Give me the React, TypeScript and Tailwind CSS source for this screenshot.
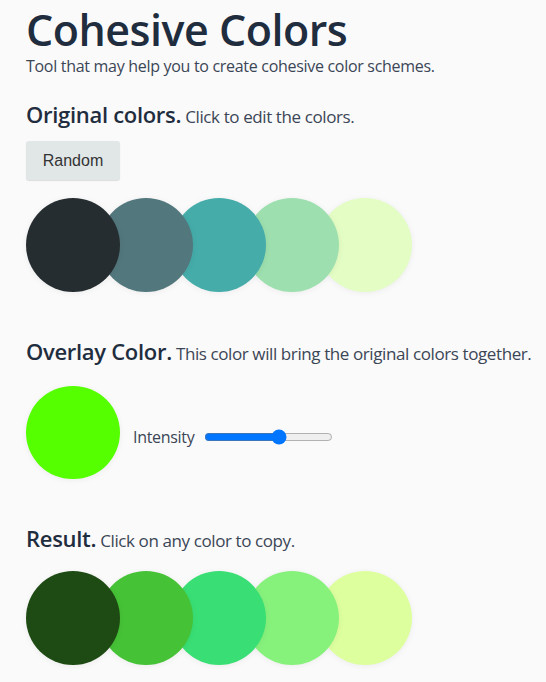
import React from 'react';

const original = ['#252d30', '#52777d', '#45aca9', '#9ddfae', '#e3fdc4'];
const result = ['#1e4a13', '#46c236', '#39df74', '#86f27c', '#ddff9e'];

function Swatches({ colors }: { colors: string[] }) {
  return (
    <div className="flex">
      {colors.map((c, i) => (
        <div
          key={c}
          className="relative -mr-[21px] h-[94px] w-[94px] shrink-0 rounded-full shadow-[0_1px_6px_rgba(0,0,0,0.06)]"
          style={{ backgroundColor: c, zIndex: colors.length - i }}
        />
      ))}
    </div>
  );
}

function Heading({ title, children }: { title: string; children: React.ReactNode }) {
  return (
    <h2 className="whitespace-nowrap text-[17px] leading-[30px] tracking-[-0.4px]">
      <span className="text-[22px] font-semibold tracking-[-0.3px] text-[#1f2d3e]">{title}</span>{' '}
      {children}
    </h2>
  );
}

export default function App() {
  return (
    <div
      className="min-h-[682px] bg-[#fafafa] px-[26px] pt-[4px] text-[#3b4656]"
      style={{ fontFamily: '"Open Sans", "Noto Sans", sans-serif' }}
    >
      <h1 className="text-[43px] font-semibold leading-[52px] tracking-[-0.5px] text-[#1f2d3e]">
        Cohesive Colors
      </h1>
      <p className="text-[16px] leading-[20px] tracking-[-0.3px]">
        Tool that may help you to create cohesive color schemes.
      </p>

      <section className="mt-[23px]">
        <Heading title="Original colors.">Click to edit the colors.</Heading>
        <button
          className="mt-[9px] h-[39px] w-[94px] rounded-[3px] bg-[#e1e7e7] text-[16px] text-[#333] shadow-[0_1px_1px_rgba(0,0,0,0.12)]"
          style={{ fontFamily: '"Liberation Sans", Arial, sans-serif' }}
        >
          Random
        </button>
        <div className="mt-[18px]">
          <Swatches colors={original} />
        </div>
      </section>

      <section className="mt-[44px]">
        <Heading title="Overlay Color.">This color will bring the original colors together.</Heading>
        <div className="mt-[17px] flex items-center">
          <div className="h-[93px] w-[94px] rounded-full bg-[#55ff00] shadow-[0_1px_6px_rgba(0,0,0,0.06)]" />
          <label className="ml-[13px] mt-[8px] flex items-center gap-[10px] text-[16px] tracking-[-0.3px]">
            Intensity
            <input type="range" defaultValue={59} className="w-[129px] accent-[#0075ff]" />
          </label>
        </div>
      </section>

      <section className="mt-[44px]">
        <Heading title="Result.">Click on any color to copy.</Heading>
        <div className="mt-[15px]">
          <Swatches colors={result} />
        </div>
      </section>
    </div>
  );
}
